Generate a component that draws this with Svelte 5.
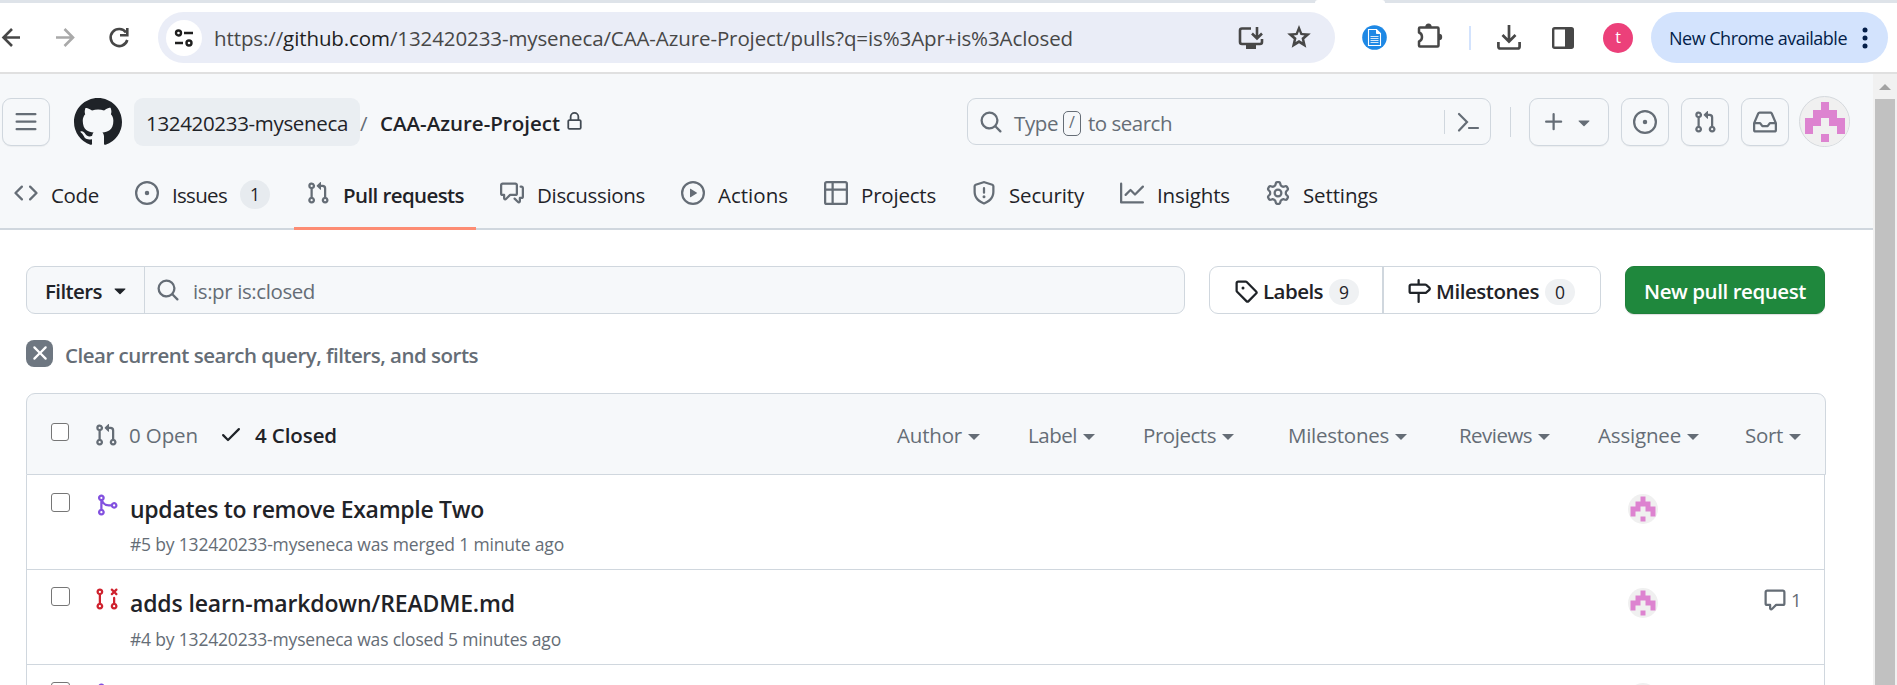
<script>
  const P = {
    bars: 'M1 2.75A.75.75 0 0 1 1.75 2h12.5a.75.75 0 0 1 0 1.5H1.75A.75.75 0 0 1 1 2.75Zm0 5A.75.75 0 0 1 1.75 7h12.5a.75.75 0 0 1 0 1.5H1.75A.75.75 0 0 1 1 7.75ZM1.75 12h12.5a.75.75 0 0 1 0 1.5H1.75a.75.75 0 0 1 0-1.5Z',
    github: 'M8 0c4.42 0 8 3.58 8 8a8.013 8.013 0 0 1-5.45 7.59c-.4.08-.55-.17-.55-.38 0-.27.01-1.13.01-2.2 0-.75-.25-1.23-.54-1.48 1.78-.2 3.65-.88 3.65-3.95 0-.88-.31-1.59-.82-2.15.08-.2.36-1.02-.08-2.12 0 0-.67-.22-2.2.82-.64-.18-1.32-.27-2-.27-.68 0-1.36.09-2 .27-1.53-1.03-2.2-.82-2.2-.82-.44 1.1-.16 1.92-.08 2.12-.51.56-.82 1.28-.82 2.15 0 3.06 1.86 3.75 3.64 3.95-.23.2-.44.55-.51 1.07-.46.21-1.61.55-2.33-.66-.15-.24-.6-.83-1.23-.82-.67.01-.27.38.01.53.34.19.73.9.82 1.13.16.45.68 1.31 2.69.94 0 .67.01 1.3.01 1.49 0 .21-.15.45-.55.38A7.995 7.995 0 0 1 0 8c0-4.42 3.58-8 8-8Z',
    lock: 'M4 4a4 4 0 0 1 8 0v2h.25c.966 0 1.75.784 1.75 1.75v5.5A1.75 1.75 0 0 1 12.25 15h-8.5A1.75 1.75 0 0 1 2 13.25v-5.5C2 6.784 2.784 6 3.75 6H4Zm8.25 3.5h-8.5a.25.25 0 0 0-.25.25v5.5c0 .138.112.25.25.25h8.5a.25.25 0 0 0 .25-.25v-5.5a.25.25 0 0 0-.25-.25ZM10.5 6V4a2.5 2.5 0 1 0-5 0v2Z',
    code: 'm11.28 3.22 4.25 4.25a.75.75 0 0 1 0 1.06l-4.25 4.25a.749.749 0 0 1-1.275-.326.749.749 0 0 1 .215-.734L13.94 8l-3.72-3.72a.749.749 0 0 1 .326-1.275.749.749 0 0 1 .734.215Zm-6.56 0a.751.751 0 0 1 1.042.018.751.751 0 0 1 .018 1.042L2.06 8l3.72 3.72a.749.749 0 0 1-.326 1.275.749.749 0 0 1-.734-.215L.47 8.53a.75.75 0 0 1 0-1.06Z',
    issue: 'M8 9.5a1.5 1.5 0 1 0 0-3 1.5 1.5 0 0 0 0 3ZM8 0a8 8 0 1 1 0 16A8 8 0 0 1 8 0ZM1.5 8a6.5 6.5 0 1 0 13 0 6.5 6.5 0 0 0-13 0Z',
    pr: 'M1.5 3.25a2.25 2.25 0 1 1 3 2.122v5.256a2.251 2.251 0 1 1-1.5 0V5.372A2.25 2.25 0 0 1 1.5 3.25Zm5.677-.177L9.573.677A.25.25 0 0 1 10 .854V2.5h1A2.5 2.5 0 0 1 13.5 5v5.628a2.251 2.251 0 1 1-1.5 0V5a1 1 0 0 0-1-1h-1v1.646a.25.25 0 0 1-.427.177L7.177 3.427a.25.25 0 0 1 0-.354ZM3.75 2.5a.75.75 0 1 0 0 1.5.75.75 0 0 0 0-1.5Zm0 9.5a.75.75 0 1 0 0 1.5.75.75 0 0 0 0-1.5Zm8.25.75a.75.75 0 1 0 1.5 0 .75.75 0 0 0-1.5 0Z',
    discuss: 'M1.75 1h8.5c.966 0 1.75.784 1.75 1.75v5.5A1.75 1.75 0 0 1 10.25 10H7.061l-2.574 2.573A1.458 1.458 0 0 1 2 11.543V10h-.25A1.75 1.75 0 0 1 0 8.25v-5.5C0 1.784.784 1 1.75 1ZM1.5 2.75v5.5c0 .138.112.25.25.25h1a.75.75 0 0 1 .75.75v2.19l2.72-2.72a.749.749 0 0 1 .53-.22h3.5a.25.25 0 0 0 .25-.25v-5.5a.25.25 0 0 0-.25-.25h-8.5a.25.25 0 0 0-.25.25Zm13 2a.25.25 0 0 0-.25-.25h-.5a.75.75 0 0 1 0-1.5h.5c.966 0 1.75.784 1.75 1.75v5.5A1.75 1.75 0 0 1 14.25 12H14v1.543a1.458 1.458 0 0 1-2.487 1.03L9.22 12.28a.749.749 0 0 1 .326-1.275.749.749 0 0 1 .734.215l2.22 2.22v-2.19a.75.75 0 0 1 .75-.75h1a.25.25 0 0 0 .25-.25Z',
    play: 'M8 0a8 8 0 1 1 0 16A8 8 0 0 1 8 0ZM1.5 8a6.5 6.5 0 1 0 13 0 6.5 6.5 0 0 0-13 0Zm4.879-2.773 4.264 2.559a.25.25 0 0 1 0 .428l-4.264 2.559A.25.25 0 0 1 6 10.559V5.442a.25.25 0 0 1 .379-.215Z',
    table: 'M0 1.75C0 .784.784 0 1.75 0h12.5C15.216 0 16 .784 16 1.75v12.5A1.75 1.75 0 0 1 14.25 16H1.75A1.75 1.75 0 0 1 0 14.25ZM6.5 6.5v8h7.75a.25.25 0 0 0 .25-.25V6.5Zm8-1.5V1.75a.25.25 0 0 0-.25-.25H6.5V5Zm-13 1.5v7.75c0 .138.112.25.25.25H5v-8ZM5 5V1.5H1.75a.25.25 0 0 0-.25.25V5Z',
    shield: 'M7.467.133a1.748 1.748 0 0 1 1.066 0l5.25 1.68A1.75 1.75 0 0 1 15 3.48V7c0 1.566-.32 3.182-1.303 4.682-.983 1.498-2.585 2.813-5.032 3.855a1.697 1.697 0 0 1-1.33 0c-2.447-1.042-4.049-2.357-5.032-3.855C1.32 10.182 1 8.566 1 7V3.48a1.75 1.75 0 0 1 1.217-1.667Zm.61 1.429a.25.25 0 0 0-.153 0l-5.25 1.68a.25.25 0 0 0-.174.238V7c0 1.358.275 2.666 1.057 3.86.784 1.194 2.121 2.34 4.366 3.297a.196.196 0 0 0 .154 0c2.245-.956 3.582-2.104 4.366-3.298C13.225 9.666 13.5 8.36 13.5 7V3.48a.251.251 0 0 0-.174-.237l-5.25-1.68ZM8.75 4.75v3a.75.75 0 0 1-1.5 0v-3a.75.75 0 0 1 1.5 0ZM9 10.5a1 1 0 1 1-2 0 1 1 0 0 1 2 0Z',
    graph: 'M1.5 1.75V13.5h13.75a.75.75 0 0 1 0 1.5H.75a.75.75 0 0 1-.75-.75V1.75a.75.75 0 0 1 1.5 0Zm14.28 2.53-5.25 5.25a.75.75 0 0 1-1.06 0L7 7.06 4.28 9.78a.751.751 0 0 1-1.042-.018.751.751 0 0 1-.018-1.042l3.25-3.25a.75.75 0 0 1 1.06 0L10 7.94l4.72-4.72a.751.751 0 0 1 1.042.018.751.751 0 0 1 .018 1.042Z',
    gear: 'M8 0a8.2 8.2 0 0 1 .701.031C9.444.095 9.99.645 10.16 1.29l.288 1.107c.018.066.079.158.212.224.231.114.454.243.668.386.123.082.233.09.299.071l1.103-.303c.644-.176 1.392.021 1.82.63.27.385.506.792.704 1.218.315.675.111 1.422-.364 1.891l-.814.806c-.049.048-.098.147-.088.294.016.257.016.515 0 .772-.01.147.038.246.088.294l.814.806c.475.469.679 1.216.364 1.891a7.977 7.977 0 0 1-.704 1.217c-.428.61-1.176.807-1.82.63l-1.102-.302c-.067-.019-.177-.011-.3.071a5.909 5.909 0 0 1-.668.386c-.133.066-.194.158-.211.224l-.29 1.106c-.168.646-.715 1.196-1.458 1.26a8.006 8.006 0 0 1-1.402 0c-.743-.064-1.289-.614-1.458-1.26l-.289-1.106c-.018-.066-.079-.158-.212-.224a5.738 5.738 0 0 1-.668-.386c-.123-.082-.233-.09-.299-.071l-1.103.303c-.644.176-1.392-.021-1.82-.63a8.12 8.12 0 0 1-.704-1.218c-.315-.675-.111-1.422.363-1.891l.815-.806c.05-.048.098-.147.088-.294a6.214 6.214 0 0 1 0-.772c.01-.147-.038-.246-.088-.294l-.815-.806C.635 6.045.431 5.298.746 4.623a7.92 7.92 0 0 1 .704-1.217c.428-.61 1.176-.807 1.82-.63l1.102.302c.067.019.177.011.3-.071.214-.143.437-.272.668-.386.133-.066.194-.158.211-.224l.29-1.106C6.009.645 6.556.095 7.299.03 7.53.01 7.764 0 8 0Zm-.571 1.525c-.036.003-.108.036-.137.146l-.289 1.105c-.147.561-.549.967-.998 1.189-.173.086-.34.183-.5.29-.417.278-.97.423-1.529.27l-1.103-.303c-.109-.03-.175.016-.195.045-.22.312-.412.644-.573.99-.014.031-.021.11.059.19l.815.806c.411.406.562.957.53 1.456a4.709 4.709 0 0 0 0 .582c.032.499-.119 1.05-.53 1.456l-.815.806c-.081.08-.073.159-.059.19.162.346.353.677.573.989.02.03.085.076.195.046l1.102-.303c.56-.153 1.113-.008 1.53.27.161.107.328.204.501.29.447.222.85.629.997 1.189l.289 1.105c.029.109.101.143.137.146a6.6 6.6 0 0 0 1.142 0c.036-.003.108-.036.137-.146l.289-1.105c.147-.561.549-.967.998-1.189.173-.086.34-.183.5-.29.417-.278.97-.423 1.529-.27l1.103.303c.109.029.175-.016.195-.045.22-.313.411-.644.573-.99.014-.031.021-.11-.059-.19l-.815-.806c-.411-.406-.562-.957-.53-1.456a4.709 4.709 0 0 0 0-.582c-.032-.499.119-1.05.53-1.456l.815-.806c.081-.08.073-.159.059-.19a6.464 6.464 0 0 0-.573-.989c-.02-.03-.085-.076-.195-.046l-1.102.303c-.56.153-1.113.008-1.53-.27a4.44 4.44 0 0 0-.501-.29c-.447-.222-.85-.629-.997-1.189l-.289-1.105c-.029-.11-.101-.143-.137-.146a6.6 6.6 0 0 0-1.142 0ZM11 8a3 3 0 1 1-6 0 3 3 0 0 1 6 0ZM9.5 8a1.5 1.5 0 1 0-3.001.001A1.5 1.5 0 0 0 9.5 8Z',
    search: 'M10.68 11.74a6 6 0 0 1-7.922-8.982 6 6 0 0 1 8.982 7.922l3.04 3.04a.749.749 0 0 1-.326 1.275.749.749 0 0 1-.734-.215ZM11.5 7a4.499 4.499 0 1 0-8.997 0A4.499 4.499 0 0 0 11.5 7Z',
    plus: 'M7.75 2a.75.75 0 0 1 .75.75V7h4.25a.75.75 0 0 1 0 1.5H8.5v4.25a.75.75 0 0 1-1.5 0V8.5H2.75a.75.75 0 0 1 0-1.5H7V2.75A.75.75 0 0 1 7.75 2Z',
    caret: 'm4.427 7.427 3.396 3.396a.25.25 0 0 0 .354 0l3.396-3.396A.25.25 0 0 0 11.396 7H4.604a.25.25 0 0 0-.177.427Z',
    inbox: 'M2.8 2.06A1.75 1.75 0 0 1 4.41 1h7.18c.7 0 1.333.417 1.61 1.06l2.74 6.395c.04.093.06.194.06.295v4.5A1.75 1.75 0 0 1 14.25 15H1.75A1.75 1.75 0 0 1 0 13.25v-4.5c0-.101.02-.202.06-.295Zm1.61.44a.25.25 0 0 0-.23.152L1.887 8H4.75a.75.75 0 0 1 .6.3L6.625 10h2.75l1.275-1.7a.75.75 0 0 1 .6-.3h2.863L11.82 2.652a.25.25 0 0 0-.23-.152Zm10.09 7h-2.875l-1.275 1.7a.75.75 0 0 1-.6.3h-3.5a.75.75 0 0 1-.6-.3L4.375 9.5H1.5v3.75c0 .138.112.25.25.25h12.5a.25.25 0 0 0 .25-.25Z',
    tag: 'M1 7.775V2.75C1 1.784 1.784 1 2.75 1h5.025c.464 0 .91.184 1.238.513l6.25 6.25a1.75 1.75 0 0 1 0 2.474l-5.026 5.026a1.75 1.75 0 0 1-2.474 0l-6.25-6.25A1.752 1.752 0 0 1 1 7.775Zm1.5 0c0 .066.026.13.073.177l6.25 6.25a.25.25 0 0 0 .354 0l5.025-5.025a.25.25 0 0 0 0-.354l-6.25-6.25a.25.25 0 0 0-.177-.073H2.75a.25.25 0 0 0-.25.25ZM6 5a1 1 0 1 1 0 2 1 1 0 0 1 0-2Z',
    milestone: 'M7.75 0a.75.75 0 0 1 .75.75V3h3.634c.414 0 .814.147 1.13.414l2.07 1.75a1.75 1.75 0 0 1 0 2.672l-2.07 1.75a1.75 1.75 0 0 1-1.13.414H8.5v5.25a.75.75 0 0 1-1.5 0V10H2.75A1.75 1.75 0 0 1 1 8.25v-3.5C1 3.784 1.784 3 2.75 3H7V.75A.75.75 0 0 1 7.75 0Zm4.384 8.5a.25.25 0 0 0 .161-.06l2.07-1.75a.248.248 0 0 0 0-.38l-2.07-1.75a.25.25 0 0 0-.161-.06H2.75a.25.25 0 0 0-.25.25v3.5c0 .138.112.25.25.25h9.384Z',
    x: 'M3.72 3.72a.75.75 0 0 1 1.06 0L8 6.94l3.22-3.22a.749.749 0 0 1 1.275.326.749.749 0 0 1-.215.734L9.06 8l3.22 3.22a.749.749 0 0 1-.326 1.275.749.749 0 0 1-.734-.215L8 9.06l-3.22 3.22a.751.751 0 0 1-1.042-.018.751.751 0 0 1-.018-1.042L6.94 8 3.72 4.78a.75.75 0 0 1 0-1.06Z',
    check: 'M13.78 4.22a.75.75 0 0 1 0 1.06l-7.25 7.25a.75.75 0 0 1-1.06 0L2.22 9.28a.751.751 0 0 1 .018-1.042.751.751 0 0 1 1.042-.018L6 10.94l6.72-6.72a.75.75 0 0 1 1.06 0Z',
    merge: 'M5.45 5.154A4.25 4.25 0 0 0 9.25 7.5h1.378a2.251 2.251 0 1 1 0 1.5H9.25A5.734 5.734 0 0 1 5 7.123v3.505a2.25 2.25 0 1 1-1.5 0V5.372a2.25 2.25 0 1 1 1.95-.218ZM4.25 13.5a.75.75 0 1 0 0-1.5.75.75 0 0 0 0 1.5Zm8.5-4.5a.75.75 0 1 0 0-1.5.75.75 0 0 0 0 1.5ZM5 3.25a.75.75 0 1 0 0 .005V3.25Z',
    prClosed: 'M3.25 1A2.25 2.25 0 0 1 4 5.372v5.256a2.251 2.251 0 1 1-1.5 0V5.372A2.251 2.251 0 0 1 3.25 1Zm9.5 5.5a.75.75 0 0 1 .75.75v3.378a2.251 2.251 0 1 1-1.5 0V7.25a.75.75 0 0 1 .75-.75Zm-2.03-5.273a.75.75 0 0 1 1.06 0l.97.97.97-.97a.748.748 0 0 1 1.265.332.75.75 0 0 1-.205.729l-.97.97.97.97a.751.751 0 0 1-.018 1.042.751.751 0 0 1-1.042.018l-.97-.97-.97.97a.749.749 0 0 1-1.275-.326.749.749 0 0 1 .215-.734l.97-.97-.97-.97a.75.75 0 0 1 0-1.06ZM2.5 3.25a.75.75 0 1 0 1.5 0 .75.75 0 0 0-1.5 0ZM3.25 12a.75.75 0 1 0 0 1.5.75.75 0 0 0 0-1.5Zm9.5 0a.75.75 0 1 0 0 1.5.75.75 0 0 0 0-1.5Z',
    comment: 'M1 2.75C1 1.784 1.784 1 2.75 1h10.5c.966 0 1.75.784 1.75 1.75v7.5A1.75 1.75 0 0 1 13.25 12H9.06l-2.573 2.573A1.458 1.458 0 0 1 4 13.543V12H2.75A1.75 1.75 0 0 1 1 10.25Zm1.75-.25a.25.25 0 0 0-.25.25v7.5c0 .138.112.25.25.25h2a.75.75 0 0 1 .75.75v2.19l2.72-2.72a.749.749 0 0 1 .53-.22h4.5a.25.25 0 0 0 .25-.25v-7.5a.25.25 0 0 0-.25-.25Z'
  };

  const tabs = [
    { icon: 'code', label: 'Code', w: 48 },
    { icon: 'issue', label: 'Issues', w: 55, count: 1 },
    { icon: 'pr', label: 'Pull requests', w: 121, active: true },
    { icon: 'discuss', label: 'Discussions', w: 108 },
    { icon: 'play', label: 'Actions', w: 70 },
    { icon: 'table', label: 'Projects', w: 75 },
    { icon: 'shield', label: 'Security', w: 75 },
    { icon: 'graph', label: 'Insights', w: 73 },
    { icon: 'gear', label: 'Settings', w: 75 }
  ];

  // w: text width, gap: space up to the next menu
  const menus = [
    { label: 'Author', w: 65, gap: 48 },
    { label: 'Label', w: 49, gap: 48 },
    { label: 'Projects', w: 73, gap: 54 },
    { label: 'Milestones', w: 101, gap: 52 },
    { label: 'Reviews', w: 73, gap: 48 },
    { label: 'Assignee', w: 83, gap: 46 },
    { label: 'Sort', w: 38, gap: 0 }
  ];

  const rows = [
    { icon: 'merge', color: '#8250df', title: 'updates to remove Example Two', tw: 354, meta: '#5 by 132420233-myseneca was merged 1 minute ago', mw: 434 },
    { icon: 'prClosed', color: '#cf222e', title: 'adds learn-markdown/README.md', tw: 385, meta: '#4 by 132420233-myseneca was closed 5 minutes ago', mw: 431, comments: 1 },
    { icon: 'merge', color: '#8250df', title: '', tw: 0, meta: '', mw: 0 }
  ];

  // Tracks a line of text so that it fills the given width.
  function fit(node, width) {
    const natural = node.getBoundingClientRect().width;
    const n = node.textContent.length;
    if (n && width) {
      node.style.letterSpacing = (width - natural) / n + 'px';
      node.style.width = width + 'px';
    }
  }
</script>

{#snippet icon(name, size = 24)}
  <svg class="oct" width={size} height={size} viewBox="0 0 16 16" fill="currentColor"><path d={P[name]} fill-rule="evenodd" /></svg>
{/snippet}

{#snippet identicon(size)}
  <svg class="oct" width={size} height={size} viewBox="0 0 30 30">
    <circle cx="15" cy="15" r="15" fill="#f0f0f0" />
    <path fill="#dd83d0" d="M12.5 2.5h5v5h5v5h5v10h-5v-5h-5v-5h-5v5h-5v5h-5v-10h5v-5h5ZM12.5 22.5h5v5h-5Z" />
  </svg>
{/snippet}

<div class="screen">
  <div class="strip"><div class="tabgap"></div></div>
  <div class="toolbar">
    <svg class="nav3" width="158" height="69" viewBox="0 3 158 69" fill="none" stroke-width="2.6">
      <path stroke="#474747" d="M20 37.5H4M12 29l-8.5 8.5L12 46" />
      <path stroke="#a9a9a9" d="M56 37.500H72M64.500 29l8.500 8.500L64.500 46" />
      <path stroke="#474747" d="M126 32.500A8.500 8.500 0 1 0 127.300 40M127.300 28v7.300H120" />
    </svg>
    <div class="omni">
      <div class="site">
        <svg width="20" height="18" viewBox="0 0 20 18" fill="none" stroke="#1f1f1f" stroke-width="2.400"><circle cx="4.500" cy="4" r="2.500" /><path d="M10 4h9M1 14h8" /><circle cx="15" cy="14" r="2.500" /></svg>
      </div>
      <span class="url" use:fit={859}>https://<b>github.com</b>/132420233-myseneca/CAA-Azure-Project/pulls?q=is%3Apr+is%3Aclosed</span>
      <svg class="install" width="26" height="24" viewBox="0 0 26 24" fill="none" stroke="#474747" stroke-width="2.600"><path d="M13 2.500H4Q2 2.500 2 4.500V16Q2 18 4 18H22Q24 18 24 16V13M19 1v11M14 7.500l5 5 5-5" /><path d="M8 19h10v4H8z" fill="#474747" stroke="none" /></svg>
      <svg class="star" width="24" height="24" viewBox="0 0 24 24" fill="#474747"><path fill-rule="evenodd" d="M12 0l3.200 7.900 8.600.7-6.500 5.600 2 8.500L12 18.200 4.700 22.700l2-8.500L.2 8.600l8.600-.7ZM12 6.300l-1.500 3.800-4 .3 3 2.700-.9 4L12 15l3.400 2.100-.9-4 3-2.700-4-.3Z" /></svg>
    </div>
    <svg class="ext" width="25" height="25" viewBox="0 0 25 25"><circle cx="12.500" cy="12.500" r="12.300" fill="#1e88e5" /><path d="M6.500 4.500h8l4 4v12h-12Z" fill="#1e88e5" stroke="#fff" stroke-width="1.100" /><path d="M14.500 4.500v4h4" stroke="#fff" fill="#fff" /><path d="M8.500 11.500h8M8.500 13.500h8M8.500 15.500h8M8.500 17.500h8" stroke="#d5e9fb" fill="none" /></svg>
    <svg class="puzzle" width="28" height="28" viewBox="0 0 28 28" fill="none" stroke="#474747" stroke-width="2.500"><path d="M5 4.500H22.500Q23.500 4.500 23.500 5.500V22.500Q23.500 23.500 22.500 23.500H5Q4 23.500 4 22.500V18.500Q7 17.500 7 14T4 9.500V5.500Q4 4.500 5 4.500Z" stroke-linejoin="round" /><path d="M10.300 4a3.200 3.500 0 0 1 6.400 0ZM24 10.800a3.200 3.200 0 0 1 0 6.400Z" fill="#474747" stroke="none" /></svg>
    <i class="bar"></i>
    <svg class="dl" width="24" height="25" viewBox="0 0 24 25" fill="none" stroke="#474747" stroke-width="2.700"><path d="M12 0v16M5.500 10l6.500 6.500L18.500 10M1.400 17v4.500Q1.400 23.500 3.400 23.500H20.600Q22.600 23.500 22.600 21.500V17" /></svg>
    <svg class="side" width="22" height="22" viewBox="0 0 22 22"><rect x="1.200" y="1.200" width="19.600" height="19.600" rx="1.500" fill="none" stroke="#474747" stroke-width="2.400" /><path d="M13 1h8v20h-8z" fill="#474747" /></svg>
    <span class="me">t</span>
    <div class="update"><span use:fit={178}>New Chrome available</span>
      <svg width="6" height="22" viewBox="0 0 6 22" fill="#041e49"><circle cx="3" cy="3" r="2.500" /><circle cx="3" cy="11" r="2.500" /><circle cx="3" cy="19" r="2.500" /></svg>
    </div>
  </div>

  <div class="view">
    <main>
      <header>
        <div class="top">
          <button class="sq">{@render icon('bars')}</button>
          <span class="logo">{@render icon('github', 48)}</span>
          <span class="owner"><span use:fit={202}>132420233-myseneca</span></span>
          <span class="slash">/</span>
          <span class="repo" use:fit={180}>CAA-Azure-Project</span>
          <span class="lock">{@render icon('lock', 19)}</span>
          <div class="search">
            {@render icon('search')}
            <span class="type" use:fit={44}>Type</span><kbd>/</kbd><span class="to" use:fit={84}>to search</span>
            <i></i>
            <svg width="24" height="24" viewBox="0 0 24 24" fill="none" stroke="#656d76" stroke-width="2.200" stroke-linecap="round"><path d="M3 4l8 8-8 8.500M13 18h9" /></svg>
          </div>
          <i class="vr"></i>
          <button class="sq add">{@render icon('plus')}{@render icon('caret')}</button>
          <button class="sq">{@render icon('issue')}</button>
          <button class="sq">{@render icon('pr')}</button>
          <button class="sq">{@render icon('inbox')}</button>
          <span class="avatar">{@render identicon(48)}</span>
        </div>
        <nav>
          {#each tabs as t}
            <a class:active={t.active}>{@render icon(t.icon)}<span use:fit={t.w}>{t.label}</span>{#if t.count}<em>{t.count}</em>{/if}</a>
          {/each}
        </nav>
      </header>

      <section class="tools">
        <div class="query">
          <div class="filters"><span use:fit={57}>Filters</span>{@render icon('caret')}</div>
          <div class="input">{@render icon('search')}<span use:fit={122}>is:pr is:closed</span></div>
        </div>
        <div class="sub">
          <div class="labels">{@render icon('tag')}<span use:fit={60}>Labels</span><em>9</em></div>
          <div class="miles">{@render icon('milestone')}<span use:fit={103}>Milestones</span><em>0</em></div>
        </div>
        <button class="new"><span use:fit={162}>New pull request</span></button>
      </section>

      <div class="clear"><span class="xbox">{@render icon('x')}</span><span class="ctext" use:fit={413}>Clear current search query, filters, and sorts</span></div>

      <div class="list">
        <div class="lhead">
          <span class="cb"></span>
          <span class="ico">{@render icon('pr')}</span>
          <span class="open" use:fit={69}>0 Open</span>
          <span class="chk">{@render icon('check')}</span>
          <span class="closed" use:fit={82}>4 Closed</span>
          <div class="menus">
            {#each menus as m}
              <span class="menu" style="margin-right:{m.gap}px"><span use:fit={m.w}>{m.label}</span><i></i></span>
            {/each}
          </div>
        </div>
        {#each rows as r}
          <div class="row">
            <span class="cb"></span>
            <span class="state" style="color:{r.color}">{@render icon(r.icon)}</span>
            <div class="txt">
              <span class="title" use:fit={r.tw}>{r.title}</span>
              <span class="meta" use:fit={r.mw}>{r.meta}</span>
            </div>
            <span class="who">{@render identicon(30)}</span>
            <span class="cm">{#if r.comments}{@render icon('comment')}<span>{r.comments}</span>{/if}</span>
          </div>
        {/each}
      </div>
    </main>
    <aside><svg width="24" height="25" viewBox="0 0 24 25"><path d="M6 16l6-6 6 6Z" fill="#a3a3a3" /></svg><div class="thumb"></div></aside>
  </div>
</div>

<style>
  :global(body) { background: #fff; overflow: hidden; }
  .screen { width: 1897px; height: 685px; overflow: hidden; display: flex; flex-direction: column; font-family: "Open Sans", "Noto Sans", sans-serif; font-size: 20.500px; line-height: 30px; color: #1f2328; }
  .screen * { box-sizing: border-box; }
  .screen span { white-space: nowrap; flex-shrink: 0; }
  svg { display: block; flex-shrink: 0; }
  button { font: inherit; margin: 0; padding: 0; color: inherit; }
  i, em, b { font-style: normal; }
  .strip { height: 3px; background: #dee3e9; flex-shrink: 0; display: flex; }
  .tabgap { margin-left: 1315px; width: 70px; background: #fff; border-radius: 4px 4px 0 0; }

  .toolbar { height: 71px; flex-shrink: 0; border-bottom: 2px solid #e0e0e0; display: flex; align-items: center; background: #fff; }
  .omni { width: 1177px; height: 51px; border-radius: 26px; background: #eaedf7; display: flex; align-items: center; flex-shrink: 0; }
  .site { width: 36px; height: 36px; border-radius: 50%; background: #fff; margin-left: 8px; display: flex; align-items: center; justify-content: center; }
  .url { margin-left: 12px; color: #474747; }
  .url b { font-weight: 400; color: #1f1f1f; }
  .install { margin-left: 165px; }
  .star { margin-left: 23px; margin-top: -1px; }
  .ext { margin-left: 27px; }
  .puzzle { margin-left: 28px; margin-top: -1px; }
  .bar { width: 2px; height: 24px; background: #d3e3fd; margin-left: 26px; }
  .dl { margin-left: 26px; }
  .side { margin-left: 31px; }
  .me { width: 30px; height: 30px; border-radius: 50%; background: #ec407a; color: #fff; margin-left: 29px; text-align: center; font-size: 16px; line-height: 29px; }
  .update { width: 237px; height: 51px; border-radius: 26px; background: #d3e3fd; margin-left: 18px; display: flex; align-items: center; padding-left: 18px; color: #041e49; font-size: 18px; gap: 15px; }

  .view { flex: 1; min-height: 0; display: flex; }
  main { width: 1873px; overflow: hidden; }
  header { background: #f6f8fa; height: 156px; border-bottom: 2px solid #d0d7de; display: flex; flex-direction: column; justify-content: space-between; padding-top: 22px; }
  .top { display: flex; align-items: center; height: 51px; padding-left: 2px; }
  .sq { width: 48px; height: 48px; border: 1.500px solid #d0d7de; border-radius: 9px; background: #f6f8fa; color: #656d76; display: flex; align-items: center; justify-content: center; flex-shrink: 0; box-shadow: 0 1px 1px rgba(31, 35, 40, .05); }
  .sq + .sq { margin-left: 12px; }
  .add { width: 80px; gap: 6px; }
  .logo { margin-left: 24px; }
  .owner { height: 48px; width: 226px; margin-left: 12px; padding: 10px 0 0 12px; border-radius: 9px; background: #eaeef2; }
  .owner span { display: block; width: max-content; }
  .slash { width: 20px; color: #656d76; margin-top: 2px; }
  .repo { font-weight: 600; margin-top: 2px; }
  .lock { margin-left: 5px; color: #424a53; }
  .search { width: 524px; height: 47px; margin-left: 383px; border: 1.500px solid #d0d7de; border-radius: 9px; display: flex; align-items: center; color: #656d76; padding-left: 11px; }
  .type { margin: 2px 0 0 11px; }
  .to { margin-top: 2px; }
  kbd { font: 16px/21px "Open Sans", sans-serif; width: 18px; height: 25px; border: 1.500px solid #656d76; border-radius: 5px; margin: 4px 7px 0 5px; text-align: center; }
  .search i { width: 1px; height: 24px; background: #d0d7de; margin: 0 11px 0 auto; }
  .search svg:last-child { margin-right: 10px; }
  .vr { width: 1px; height: 30px; background: #d0d7de; margin: 0 18px 0 19px; }
  .avatar { width: 51px; height: 51px; border-radius: 50%; border: 1.500px solid #d5d9dd; margin-left: 10px; background: #f0f0f0; display: flex; align-items: center; justify-content: center; }
  nav { display: flex; gap: 12px; padding-left: 2px; height: 70px; margin-bottom: -2px; }
  nav a { height: 70px; display: flex; align-items: center; padding: 1px 12px 0; gap: 13px; border-bottom: 3px solid transparent; }
  nav a svg { color: #656d76; margin-top: -2px; }
  nav a span { margin-top: 2px; }
  nav .active { font-weight: 600; border-color: #fd8c73; }
  nav em { width: 30px; height: 29px; border-radius: 15px; background: #e7ebef; text-align: center; font-size: 17.500px; line-height: 29px; }

  .tools { display: flex; margin: 36px 0 0 26px; height: 48px; }
  .query { width: 1159px; border: 1.500px solid #d0d7de; border-radius: 9px; display: flex; background: #f6f8fa; }
  .filters { width: 118px; border-right: 1.500px solid #d0d7de; padding-left: 18px; display: flex; align-items: center; font-weight: 600; gap: 6px; }
  .filters span { margin-top: 1px; }
  .input { display: flex; align-items: center; padding-left: 11px; gap: 13px; color: #656d76; }
  .input span { margin-top: 2px; }
  .sub { width: 392px; margin-left: 24px; border: 1.500px solid #d0d7de; border-radius: 9px; display: flex; font-weight: 600; }
  .sub > div { display: flex; align-items: center; }
  .labels { width: 174px; padding-left: 24px; border-right: 2px solid #d0d7de; }
  .miles { padding-left: 23px; }
  .sub svg { margin-top: 2px; }
  .sub span { margin: 2px 6px 0 5px; }
  .sub em { width: 30px; height: 26px; border-radius: 13px; background: #eff1f3; text-align: center; font-size: 17.500px; line-height: 26px; margin-top: 3px; font-weight: 500; }
  .new { width: 200px; height: 48px; margin-left: 24px; border: 1.500px solid #1f7f3a; border-radius: 9px; background: #1f883d; color: #fff; font-weight: 600; display: flex; justify-content: center; align-items: center; box-shadow: 0 1px 1px rgba(31, 35, 40, .15); }
  .new span { margin-top: 1px; }

  .clear { display: flex; align-items: center; margin: 25px 0 0 26px; height: 30px; gap: 12px; color: #656d76; font-weight: 600; }
  .ctext { margin-top: 2px; }
  .xbox { width: 27px; height: 27px; border-radius: 8px; background: #6e7781; color: #fff; display: flex; align-items: center; justify-content: center; margin-top: -2px; }

  .list { margin: 24px 0 0 26px; width: 1800px; }
  .lhead { height: 82px; border: 1.500px solid #d0d7de; border-radius: 9px 9px 0 0; background: #f6f8fa; display: flex; align-items: center; color: #656d76; padding-left: 24px; }
  .cb { width: 18px; height: 18px; border: 1.500px solid #767676; border-radius: 3px; background: #fff; }
  .lhead .cb { margin-top: -4px; }
  .ico { margin: 2px 0 0 25px; }
  .open { margin: 2px 0 0 11px; }
  .chk { margin: 0 0 0 21px; color: #1f2328; }
  .closed { margin: 2px 0 0 12px; color: #1f2328; font-weight: 600; }
  .menus { display: flex; margin: 2px 0 0 auto; padding-right: 24px; }
  .menu { display: flex; align-items: center; gap: 6px; }
  .menu i { border: 6px solid transparent; border-top-color: #656d76; border-bottom: 0; margin-top: 4px; }
  .row { width: 1799px; height: 95px; border: solid #d0d7de; border-width: 0 1px 1px; display: flex; padding-left: 24px; }
  .row + .row { padding-top: 0; }
  .row .cb { margin: 18px 0 0; width: 19px; height: 19px; }
  .row + .row .cb { margin-top: 17px; }
  .state { margin: 18px 0 0 25px; height: 24px; }
  .row + .row .state { margin-top: 17px; }
  .txt { margin-left: 11px; width: 1487px; display: flex; flex-direction: column; align-items: flex-start; }
  .title { font-size: 23px; line-height: 34px; font-weight: 600; margin-top: 17px; }
  .row + .row .title { margin-top: 16px; }
  .meta { font-size: 17.500px; line-height: 24px; color: #656d76; margin-top: 6px; }
  .row + .row .meta { margin-top: 7px; }
  .who { margin: 19px 0 0 11px; }
  .row + .row .who { margin-top: 18px; }
  .cm { margin: 13px 0 0 105px; display: flex; gap: 4px; align-items: center; height: 34px; font-size: 18.500px; color: #656d76; }
  aside { width: 24px; background: #f1f1f1; }
  .thumb { width: 20px; height: 600px; margin-left: 2px; background: #c1c1c1; }
</style>
